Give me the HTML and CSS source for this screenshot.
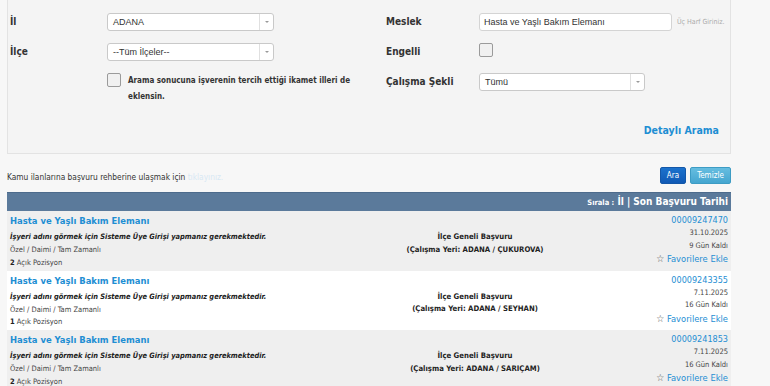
FILE: index.html
```html
<!DOCTYPE html>
<html lang="tr">
<head>
  <meta charset="UTF-8" />
  <title>İş İlanları</title>
  <link rel="stylesheet" href="styles.css">
</head>
<body>
  <div class="page">

    <!-- ARAMA FORMU -->
    <div class="search-panel">
      <div class="form-grid">
        <div class="field">
          <label class="field-label">İl</label>
          <div class="select"><span>ADANA</span><i class="arrow"></i></div>
        </div>
        <div class="field right">
          <label class="field-label">Meslek</label>
          <div class="text-input">Hasta ve Yaşlı Bakım Elemanı</div>
          <span class="hint">Üç Harf Giriniz.</span>
        </div>

        <div class="field">
          <label class="field-label">İlçe</label>
          <div class="select"><span>--Tüm İlçeler--</span><i class="arrow"></i></div>
        </div>
        <div class="field right">
          <label class="field-label">Engelli</label>
          <span class="check"></span>
        </div>

        <div class="field">
          <span class="field-label"></span>
          <div class="check-row">
            <span class="check"></span>
            <p>Arama sonucuna işverenin tercih ettiği ikamet illeri de eklensin.</p>
          </div>
        </div>
        <div class="field right">
          <label class="field-label">Çalışma Şekli</label>
          <div class="select"><span>Tümü</span><i class="arrow"></i></div>
        </div>
      </div>
      <div class="detail-link"><a href="#">Detaylı Arama</a></div>
    </div>

    <div class="toolbar">
      <p>Kamu ilanlarına başvuru rehberine ulaşmak için <a href="#">tıklayınız.</a></p>
      <div class="buttons">
        <button class="btn-search">Ara</button>
        <button class="btn-clear">Temizle</button>
      </div>
    </div>

    <!-- SONUÇ LİSTESİ -->
    <div class="results">
      <div class="results-head"><small>Sırala :</small> İl | Son Başvuru Tarihi</div>

      <div class="job">
        <div class="job-main">
          <a class="job-title" href="#">Hasta ve Yaşlı Bakım Elemanı</a>
          <p class="job-company">İşyeri adını görmek için Sisteme Üye Girişi yapmanız gerekmektedir.</p>
          <p class="job-type">Özel / Daimi / Tam Zamanlı</p>
          <p class="job-type"><b>2</b> Açık Pozisyon</p>
        </div>
        <div class="job-place">
          <p>İlçe Geneli Başvuru</p>
          <p>(Çalışma Yeri: ADANA / ÇUKUROVA)</p>
        </div>
        <div class="job-meta">
          <a class="job-no" href="#">00009247470</a>
          <p>31.10.2025</p>
          <p>9 Gün Kaldı</p>
          <a class="fav" href="#"><span class="star">☆</span> Favorilere Ekle</a>
        </div>
      </div>

      <div class="job">
        <div class="job-main">
          <a class="job-title" href="#">Hasta ve Yaşlı Bakım Elemanı</a>
          <p class="job-company">İşyeri adını görmek için Sisteme Üye Girişi yapmanız gerekmektedir.</p>
          <p class="job-type">Özel / Daimi / Tam Zamanlı</p>
          <p class="job-type"><b>1</b> Açık Pozisyon</p>
        </div>
        <div class="job-place">
          <p>İlçe Geneli Başvuru</p>
          <p>(Çalışma Yeri: ADANA / SEYHAN)</p>
        </div>
        <div class="job-meta">
          <a class="job-no" href="#">00009243355</a>
          <p>7.11.2025</p>
          <p>16 Gün Kaldı</p>
          <a class="fav" href="#"><span class="star">☆</span> Favorilere Ekle</a>
        </div>
      </div>

      <div class="job">
        <div class="job-main">
          <a class="job-title" href="#">Hasta ve Yaşlı Bakım Elemanı</a>
          <p class="job-company">İşyeri adını görmek için Sisteme Üye Girişi yapmanız gerekmektedir.</p>
          <p class="job-type">Özel / Daimi / Tam Zamanlı</p>
          <p class="job-type"><b>2</b> Açık Pozisyon</p>
        </div>
        <div class="job-place">
          <p>İlçe Geneli Başvuru</p>
          <p>(Çalışma Yeri: ADANA / SARIÇAM)</p>
        </div>
        <div class="job-meta">
          <a class="job-no" href="#">00009241853</a>
          <p>7.11.2025</p>
          <p>16 Gün Kaldı</p>
          <a class="fav" href="#"><span class="star">☆</span> Favorilere Ekle</a>
        </div>
      </div>
    </div>

  </div>
</body>
</html>
```

FILE: styles.css
```css
* {
  margin: 0;
  padding: 0;
  box-sizing: border-box;
}

body {
  font-family: "DejaVu Sans Condensed", "DejaVu Sans", sans-serif;
  font-size: 9px;
  color: #333;
  background: #f7f7f7;
  overflow: hidden;
}

a {
  text-decoration: none;
}

.page {
  width: 731px;
  padding-left: 7px;
}

/* FORMULAIRE */
.search-panel {
  background: #f4f4f4;
  border: 1px solid #e3e3e3;
  border-top: none;
  height: 154px;
  padding: 13px 0 0 2px;
}

.form-grid {
  display: grid;
  grid-template-columns: 376px 1fr;
  row-gap: 12px;
}

.field {
  display: flex;
  align-items: flex-start;
}

.field-label {
  width: 97px;
  font-size: 10px;
  font-weight: bold;
  color: #333;
  line-height: 18px;
  flex-shrink: 0;
}

.field.right .field-label {
  width: 93px;
}

.select {
  width: 167px;
  height: 18px;
  background: #fff;
  border: 1px solid #c9c9c9;
  border-radius: 3px;
  display: flex;
  align-items: center;
  justify-content: space-between;
  font-family: "Liberation Sans", Arial, sans-serif;
  font-size: 9px;
  color: #333;
  padding-left: 5px;
}

.arrow {
  width: 14px;
  height: 16px;
  border-left: 1px solid #e0e0e0;
  position: relative;
}

.arrow::after {
  content: "";
  position: absolute;
  left: 5px;
  top: 7px;
  border-left: 2px solid transparent;
  border-right: 2px solid transparent;
  border-top: 2px solid #999;
}

.text-input {
  width: 193px;
  height: 18px;
  background: #fff;
  border: 1px solid #d4d4d4;
  border-radius: 3px;
  font-family: "Liberation Sans", Arial, sans-serif;
  font-size: 9px;
  line-height: 16px;
  padding-left: 4px;
}

.hint {
  font-size: 7px;
  color: #aaa;
  margin-left: 5px;
  line-height: 18px;
}

.check {
  display: inline-block;
  width: 14px;
  height: 14px;
  background: #f0f0f0;
  border: 1px solid #9a9a9a;
  border-radius: 2px;
  flex-shrink: 0;
}

.check-row {
  display: flex;
  gap: 7px;
  width: 260px;
}

.check-row p {
  font-size: 8px;
  font-weight: bold;
  line-height: 16px;
  width: 225px;
}

.field.right .select {
  width: 166px;
}

.detail-link {
  text-align: right;
  padding: 19px 11px 0 0;
}

.detail-link a {
  font-size: 10.5px;
  font-weight: bold;
  color: #1e8ed3;
}

/* BARRE D'OUTILS */
.toolbar {
  display: flex;
  justify-content: space-between;
  align-items: center;
  padding: 13px 0 8px;
}

.toolbar p {
  font-size: 8.3px;
  color: #333;
  padding-top: 3px;
}

.toolbar p a {
  color: #d7e8f4;
}

.buttons {
  display: flex;
  gap: 4px;
}

button {
  font-family: inherit;
  font-size: 8px;
  color: #fff;
  border: 1px solid #1457a8;
  border-radius: 2px;
  height: 17px;
  cursor: pointer;
}

.btn-search {
  width: 26px;
  background: linear-gradient(#1c72cc, #1059b5);
}

.btn-clear {
  width: 41px;
  border-color: #3d9cc4;
  background: linear-gradient(#66bde0, #45a6d0);
}

/* RESULTATS */
.results-head {
  background: #5b7a9b;
  border-top: 1px solid #4d6b8c;
  height: 19px;
  line-height: 18px;
  color: #fff;
  font-size: 10px;
  font-weight: bold;
  text-align: right;
  padding-right: 3px;
}

.results-head small {
  font-size: 7.5px;
}

.job {
  display: grid;
  grid-template-columns: 350px 230px 1fr;
  background: #fff;
  height: 59.5px;
  padding: 3px 3px 0 3px;
}

.job:nth-child(even) {
  background: #efefef;
}

.job-title {
  display: block;
  color: #1e8ed3;
  font-size: 9.4px;
  font-weight: bold;
  line-height: 14px;
}

.job-company {
  font-size: 7.4px;
  font-weight: bold;
  font-style: italic;
  color: #222;
  line-height: 15px;
  margin-top: 1px;
}

.job-type {
  font-size: 7.5px;
  color: #444;
  line-height: 12.5px;
}

.job-type b {
  color: #222;
}

.job-place {
  text-align: center;
  font-size: 7.7px;
  font-weight: bold;
  color: #222;
  line-height: 12.5px;
  padding-top: 17px;
}

.job-meta {
  text-align: right;
  font-size: 7.5px;
  color: #444;
  line-height: 12.5px;
}

.job-no {
  display: block;
  color: #1e8ed3;
  font-size: 9px;
  line-height: 13px;
}

.fav {
  display: block;
  color: #1e8ed3;
  font-size: 9.3px;
  line-height: 13px;
}

.star {
  color: #555;
  font-size: 10px;
}
```
